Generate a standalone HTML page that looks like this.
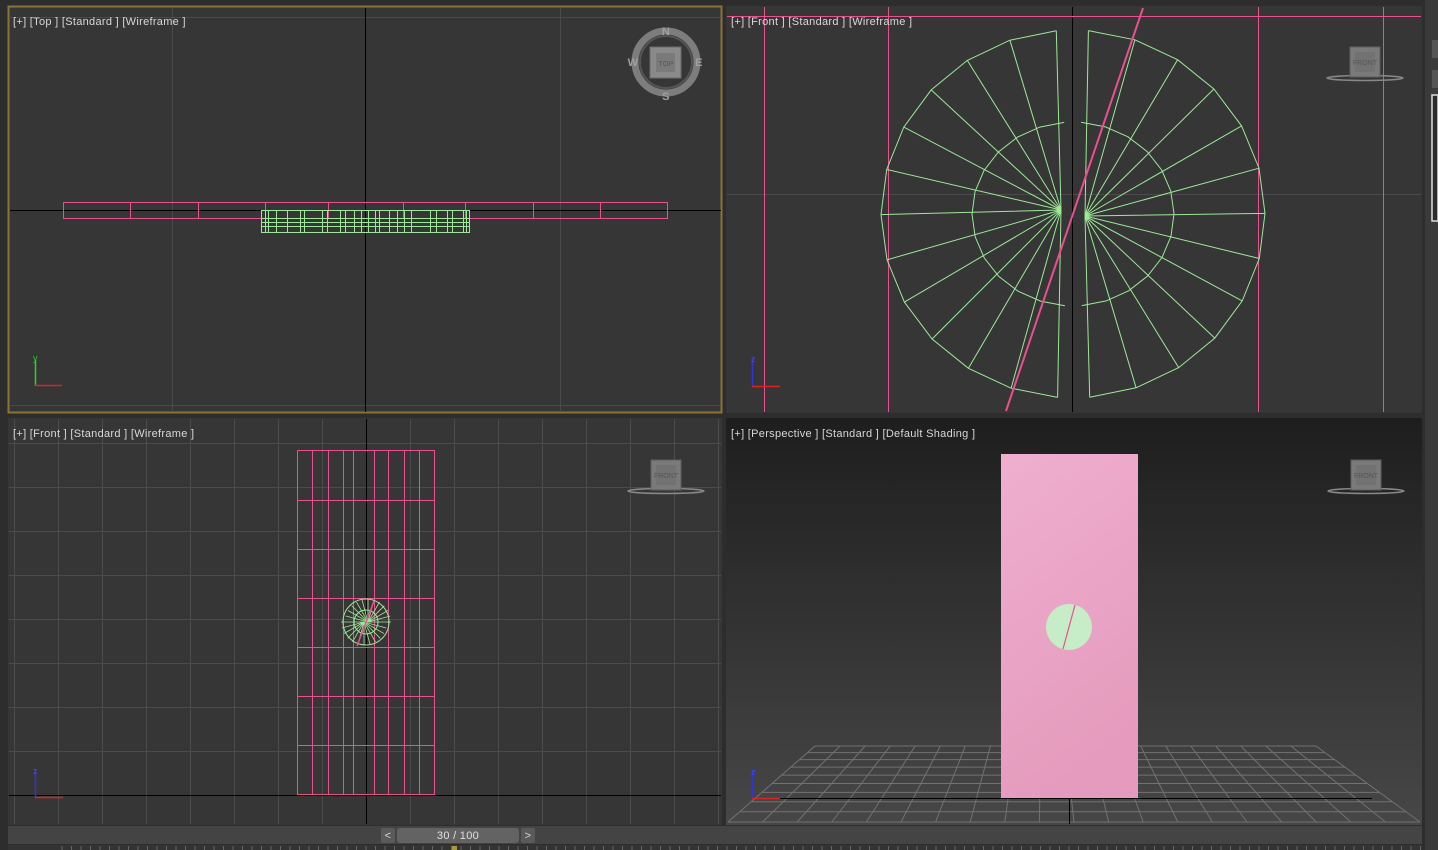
<!DOCTYPE html>
<html><head><meta charset="utf-8"><style>
html,body{margin:0;padding:0;background:#2d2d2d;width:1438px;height:850px;overflow:hidden}
svg{display:block}
text{font-family:"Liberation Sans",sans-serif;font-size:11px;fill:#d8d8d8;letter-spacing:0.3px}
</style></head><body>
<svg id="s" width="1438" height="850" viewBox="0 0 1438 850" xmlns="http://www.w3.org/2000/svg">
<defs>
<linearGradient id="pg" x1="0" y1="0" x2="0" y2="1"><stop offset="0" stop-color="#1e1e1e"/><stop offset="1" stop-color="#474747"/></linearGradient>
<linearGradient id="pk" x1="0" y1="0" x2="0.3" y2="1"><stop offset="0" stop-color="#efafcf"/><stop offset="1" stop-color="#e59bbd"/></linearGradient>
<clipPath id="c1"><rect x="10" y="8" width="711" height="404"/></clipPath>
<clipPath id="c2"><rect x="727" y="7" width="694" height="405"/></clipPath>
<clipPath id="c3"><rect x="9" y="419" width="712" height="405"/></clipPath>
<clipPath id="c4"><rect x="727" y="419" width="694" height="405"/></clipPath>
</defs>
<rect x="0" y="0" width="1438" height="850" fill="#2d2d2d"/>
<rect x="1425" y="0" width="13" height="850" fill="#3a3a3a"/>
<rect x="1432" y="40" width="6" height="18" fill="#555"/>
<rect x="1432" y="70" width="6" height="18" fill="#555"/>
<rect x="1432" y="95" width="6" height="126" fill="#2a2a2a" stroke="#ddd" stroke-width="1.5"/>
<rect x="8.5" y="6.5" width="713" height="406" fill="#363636" stroke="#8b7432" stroke-width="2"/>
<g clip-path="url(#c1)" id="g1">
<line x1="10" y1="17.5" x2="721" y2="17.5" stroke="#4a4a4a"/>
<line x1="172.5" y1="8" x2="172.5" y2="412" stroke="#4a4a4a"/>
<line x1="560.5" y1="8" x2="560.5" y2="412" stroke="#4a4a4a"/>
<line x1="10" y1="405.5" x2="721" y2="405.5" stroke="#4a4a4a"/>
<line x1="10" y1="210.5" x2="721" y2="210.5" stroke="#000"/>
<line x1="365.5" y1="8" x2="365.5" y2="412" stroke="#000"/>
</g>
<text x="13" y="25">[+] [Top ] [Standard ] [Wireframe ]</text>
<circle cx="666" cy="62" r="31" fill="none" stroke="#7d7d7d" stroke-width="7"/>
<circle cx="666" cy="62" r="26" fill="none" stroke="#555" stroke-width="2"/>
<rect x="650" y="47" width="31" height="31" fill="#8a8a8a" stroke="#6a6a6a"/>
<rect x="656" y="53" width="19" height="19" fill="#7a7a7a"/>
<text x="666" y="66" text-anchor="middle" style="font-size:7px;fill:#555">TOP</text>
<text x="666" y="35" text-anchor="middle" style="font-size:11px;font-weight:bold;fill:#a0a0a0">N</text>
<text x="666" y="100" text-anchor="middle" style="font-size:11px;font-weight:bold;fill:#a0a0a0">S</text>
<text x="633" y="66" text-anchor="middle" style="font-size:11px;font-weight:bold;fill:#a0a0a0">W</text>
<text x="699" y="66" text-anchor="middle" style="font-size:11px;font-weight:bold;fill:#a0a0a0">E</text>
<rect x="726" y="6" width="696" height="407" fill="#363636"/>
<g clip-path="url(#c2)" id="g2">
<line x1="727" y1="194.5" x2="1421" y2="194.5" stroke="#4a4a4a"/>
<line x1="1072.5" y1="7" x2="1072.5" y2="412" stroke="#000"/>
</g>
<text x="731" y="25">[+] [Front ] [Standard ] [Wireframe ]</text>
<rect x="8" y="418" width="714" height="407" fill="#363636"/>
<g clip-path="url(#c3)" id="g3"></g>
<text x="13" y="437">[+] [Front ] [Standard ] [Wireframe ]</text>
<rect x="726" y="418" width="696" height="407" fill="url(#pg)"/>
<g clip-path="url(#c4)" id="g4"></g>
<text x="731" y="437">[+] [Perspective ] [Standard ] [Default Shading ]</text>
<rect x="8" y="826" width="1414" height="18" fill="#444"/>
<rect x="381" y="828" width="14" height="15" rx="2" fill="#5a5a5a"/>
<text x="388" y="839" text-anchor="middle">&lt;</text>
<rect x="397" y="828" width="122" height="15" rx="3" fill="#636363"/>
<text x="458" y="839" text-anchor="middle" style="fill:#e0e0e0">30 / 100</text>
<rect x="521" y="828" width="14" height="15" rx="2" fill="#5a5a5a"/>
<text x="528" y="839" text-anchor="middle">&gt;</text>
<rect x="8" y="845" width="1414" height="5" fill="#333"/>
<rect x="451" y="846" width="6" height="4" fill="#a59a3a"/>
<g id="ticks"></g>
</svg>
<script>
var NS="http://www.w3.org/2000/svg";
function el(p,t,a){var e=document.createElementNS(NS,t);for(var k in a)e.setAttribute(k,a[k]);document.getElementById(p).appendChild(e);return e;}
function L(p,x1,y1,x2,y2,c,w){el(p,'line',{x1:x1,y1:y1,x2:x2,y2:y2,stroke:c,'stroke-width':w||1});}
var PK='#e8508f',GR='#9ee89a';
el('g1','rect',{x:63.5,y:202.5,width:604,height:16,fill:'none',stroke:PK});
[130,198,265,328,403,465,533,600].forEach(function(x){L('g1',x+.5,202,x+.5,218,PK);});
el('g1','rect',{x:261.5,y:210.5,width:208,height:22,fill:'none',stroke:GR});
[218.5,222.5,226.5].forEach(function(y){L('g1',261,y,469,y,GR);});
[265,268,276,287,300,304,322,327,340,345,354,361,368,375,379,389,397,404,411,430,436,447,452,463,466].forEach(function(x){L('g1',x+.5,210,x+.5,233,GR);});
function trip(p,x,y,top){L(p,x+.5,y-28,x+.5,y,top,1.5);L(p,x,y+.5,x+28,y+.5,'#d22',1.5);}
L('g1',35.5,360,35.5,386,'#3c3',1.5);L('g1',35,385.5,62,385.5,'#d22',1.5);
el('g1','text',{x:33,y:361,style:'font-size:9px;fill:#3c3'}).textContent='y';
[764,888,1258,1383].forEach(function(x){L('g2',x+.5,7,x+.5,412,PK);});
L('g2',727,16.5,1421,16.5,PK);
var cx=1073,cy=214,RX=192,RY=184,rx=101,ry=92;
var hubs=[[1061,210],[1085,216]];
var d='';
for(var s=0;s<2;s++){
 var h=hubs[s];var pts=[],ip=[];
 for(var k=0;k<=12;k++){
  var a=(s==0?95+k*14.2:-85+k*14.2)*Math.PI/180;
  var ox=cx+RX*Math.cos(a), oy=cy-RY*Math.sin(a);
  pts.push(ox.toFixed(1)+' '+oy.toFixed(1));
  ip.push((cx+rx*Math.cos(a)).toFixed(1)+' '+(cy-ry*Math.sin(a)).toFixed(1));
  d+='M'+h[0]+' '+h[1]+'L'+ox.toFixed(1)+' '+oy.toFixed(1);
 }
 d+='M'+pts.join('L')+'M'+ip.join('L');
}
el('g2','path',{d:d,fill:'none',stroke:GR,'stroke-width':1});
L('g2',1143,8,1006,411,PK,2);
trip('g2',752,386,'#33d');
el('g2','text',{x:751,y:362,style:'font-size:9px;fill:#44f'}).textContent='z';
function cube(p,x,y){el(p,'ellipse',{cx:x+15,cy:y+31,rx:38,ry:2.5,fill:'none',stroke:'#888','stroke-width':1.5});
 el(p,'rect',{x:x,y:y,width:30,height:30,fill:'#7a7a7a',stroke:'#5e5e5e'});
 el(p,'rect',{x:x+5,y:y+5,width:20,height:20,fill:'#727272'});
 var t=el(p,'text',{x:x+15,y:y+18,'text-anchor':'middle',style:'font-size:7px;fill:#555;letter-spacing:0'});t.textContent='FRONT';}
cube('g2',1350,47);
for(var x=14;x<722;x+=44){L('g3',x+.5,419,x+.5,824,'#4c4c4c');}
for(var y=443;y<824;y+=44){L('g3',9,y+.5,721,y+.5,'#4c4c4c');}
L('g3',9,795.5,721,795.5,'#000');L('g3',366.5,419,366.5,824,'#000');
[297,312,328,343,353,374,388,404,419,434].forEach(function(x){L('g3',x+.5,450,x+.5,795,PK);});
[450,500,549,598,647,696,745,794].forEach(function(y){L('g3',297,y+.5,435,y+.5,PK);});
var dd='';for(var k=0;k<24;k++){var a=k*15*Math.PI/180;var hx=k<12?368:364;dd+='M'+hx+' 622L'+(hx+23*Math.cos(a)).toFixed(1)+' '+(622-23*Math.sin(a)).toFixed(1);}
el('g3','path',{d:dd,fill:'none',stroke:GR,'stroke-width':.8});
el('g3','circle',{cx:366,cy:622,r:23,fill:'none',stroke:GR});
el('g3','circle',{cx:366,cy:622,r:12,fill:'none',stroke:GR});
L('g3',374,601,357,646,PK,1.5);
trip('g3',35,797,'#33d');
el('g3','text',{x:33,y:774,style:'font-size:9px;fill:#44f'}).textContent='z';
cube('g3',651,460);
var yT=746,yB=822,xTL=815,xTR=1316,xBL=728,xBR=1420,dg='';
for(var i=0;i<=20;i++){var t=i/20;dg+='M'+(xTL+t*(xTR-xTL)).toFixed(1)+' '+yT+'L'+(xBL+t*(xBR-xBL)).toFixed(1)+' '+yB;}
for(var j=0;j<=9;j++){var u=j/9;var y=yT+(yB-yT)*u*(0.75+0.25*u);var xl=xTL+(xBL-xTL)*(y-yT)/(yB-yT),xr=xTR+(xBR-xTR)*(y-yT)/(yB-yT);dg+='M'+xl.toFixed(1)+' '+y.toFixed(1)+'L'+xr.toFixed(1)+' '+y.toFixed(1);}
el('g4','path',{d:dg,fill:'none',stroke:'#727272','stroke-width':1});
L('g4',765,798.5,1372,798.5,'#000');L('g4',1069.5,798,1069.5,824,'#000');
el('g4','rect',{x:1001,y:454,width:137,height:344,fill:'url(#pk)'});
el('g4','circle',{cx:1069,cy:627,r:23,fill:'#c6ecc8'});
L('g4',1075,605,1063,649,PK,1.2);
trip('g4',752,798,'#33d');
el('g4','text',{x:751,y:775,style:'font-size:9px;fill:#44f'}).textContent='z';
cube('g4',1351,460);
var tg='';for(var x=62;x<1422;x+=9.5){tg+='M'+x.toFixed(1)+' 846V850';}
el('ticks','path',{d:tg,stroke:'#666','stroke-width':1});
</script>
</body></html>
